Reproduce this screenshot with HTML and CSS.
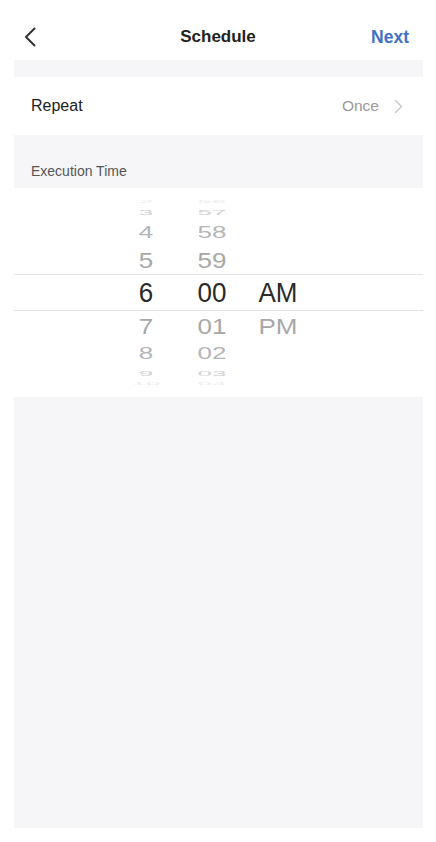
FILE: index.html
```html
<!DOCTYPE html>
<html lang="en">
<head>
<meta charset="utf-8">
<title>Schedule</title>
<link rel="stylesheet" href="styles.css">
</head>
<body>
<div class="page">
  <header class="nav">
    <div class="nav-left">
      <svg class="back" width="12" height="20" viewBox="0 0 12 20"><path d="M10.5 1.5 L2 10 L10.5 18.5" fill="none" stroke="#333" stroke-width="2" stroke-linecap="round" stroke-linejoin="round"/></svg>
    </div>
    <div class="nav-title">Schedule</div>
    <div class="nav-right">Next</div>
  </header>
  <main class="content">
    <div class="gap-top"></div>
    <div class="row-item">
      <span class="row-label">Repeat</span>
      <span class="row-value">Once
        <svg class="chev" width="9" height="15" viewBox="0 0 9 15"><path d="M1.5 1.5 L7.5 7.5 L1.5 13.5" fill="none" stroke="#c6c6c8" stroke-width="1.4" stroke-linecap="round" stroke-linejoin="round"/></svg>
      </span>
    </div>
    <div class="section-head">Execution Time</div>
    <div class="picker">
      <div class="prow r2"><span class="cell"><i>2</i></span><span class="cell"><i>56</i></span><span class="cell"></span></div>
      <div class="prow r3"><span class="cell"><i>3</i></span><span class="cell"><i>57</i></span><span class="cell"></span></div>
      <div class="prow r4"><span class="cell"><i>4</i></span><span class="cell"><i>58</i></span><span class="cell"></span></div>
      <div class="prow r5"><span class="cell"><i>5</i></span><span class="cell"><i>59</i></span><span class="cell"></span></div>
      <div class="prow sel"><span class="cell"><i>6</i></span><span class="cell"><i>00</i></span><span class="cell"><i>AM</i></span></div>
      <div class="prow r5"><span class="cell"><i>7</i></span><span class="cell"><i>01</i></span><span class="cell"><i>PM</i></span></div>
      <div class="prow r4"><span class="cell"><i>8</i></span><span class="cell"><i>02</i></span><span class="cell"></span></div>
      <div class="prow r3"><span class="cell"><i>9</i></span><span class="cell"><i>03</i></span><span class="cell"></span></div>
      <div class="prow r2"><span class="cell"><i>10</i></span><span class="cell"><i>04</i></span><span class="cell"></span></div>
    </div>
    <div class="filler"></div>
  </main>
</div>
</body>
</html>
```
FILE: styles.css
```css
* { box-sizing: border-box; }
html, body { margin: 0; padding: 0; background: #ffffff; }
body {
  font-family: "Liberation Sans", Arial, Helvetica, sans-serif;
  color: #222;
}
.page { width: 436px; height: 842px; overflow: hidden; }

.nav {
  height: 60px;
  padding-top: 14px;
  display: grid;
  grid-template-columns: 1fr auto 1fr;
  align-items: center;
}
.nav-left { padding-left: 24px; display: flex; align-items: center; }
.back { display: block; }
.nav-title { font-size: 17px; font-weight: 700; color: #222; }
.nav-right {
  text-align: right;
  padding-right: 27px;
  font-size: 17.5px;
  font-weight: 700;
  color: #4271c3;
}

.content { margin: 0 13px 0 14px; }
.gap-top { height: 17px; background: #f6f6f8; }

.row-item {
  height: 58px;
  display: flex;
  align-items: center;
  justify-content: space-between;
  padding: 0 20px 0 17px;
  background: #fff;
}
.row-label { font-size: 16px; color: #222; }
.row-value {
  display: flex;
  align-items: center;
  gap: 15px;
  font-size: 15.5px;
  color: #9a9a9a;
}
.chev { display: block; }

.section-head {
  height: 53px;
  background: #f6f6f8;
  display: flex;
  align-items: flex-end;
  padding: 0 0 8px 17px;
  font-size: 14px;
  line-height: 18px;
  color: #555;
}

.picker {
  height: 209px;
  padding-top: 10px;
  background: #fff;
}
.prow {
  display: grid;
  grid-template-columns: 66px 66px 66px;
  grid-template-rows: minmax(0, 1fr);
  padding-left: 99px;
  overflow: hidden;
}
.cell {
  height: 100%;
  min-height: 0;
  display: flex;
  align-items: center;
  justify-content: center;
  font-size: 26px;
}
.cell i { font-style: normal; display: inline-block; line-height: 1; flex: none; }

.r2 { height: 7px; }
.r2 .cell { color: #ececec; }
.r2 .cell i { transform: scaleY(0.12); }
.r3 { height: 14px; }
.r3 .cell { color: #d0d0d0; }
.r3 .cell i { transform: scaleY(0.3); }
.r4 { height: 26px; }
.r4 .cell { color: #b5b5b5; }
.r4 .cell i { transform: scaleY(0.62); }
.r5 { height: 29px; }
.r5 .cell { color: #a8a8a8; }
.r5 .cell i { transform: scaleY(0.84); }
.sel {
  height: 37px;
  border-top: 1px solid #e4e4e6;
  border-bottom: 1px solid #e4e4e6;
}
.sel .cell { color: #2a2a2a; }
.sel .cell i { transform: scaleY(1.05); }

.filler { height: 431px; background: #f6f6f8; }
```
